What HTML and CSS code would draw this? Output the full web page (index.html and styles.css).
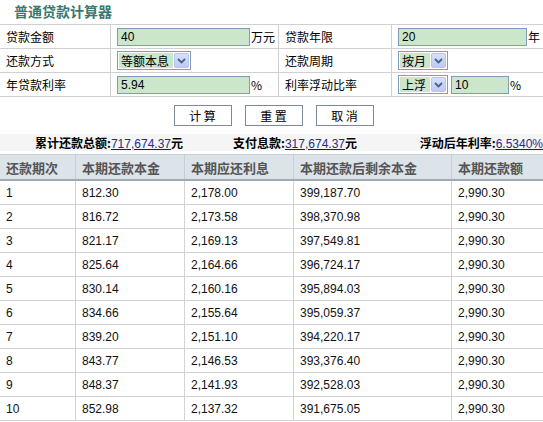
FILE: index.html
```html
<!DOCTYPE html>
<html lang="zh-CN">
<head>
    <meta charset="UTF-8">
    <title>普通贷款计算器</title>
    <link rel="stylesheet" href="styles.css">
</head>
<body>

<h2 class="title">普通贷款计算器</h2>

<table class="form-table">
    <tr>
        <td class="label">贷款金额</td>
        <td><input type="text" class="field" value="40"><span class="unit">万元</span></td>
        <td class="label">贷款年限</td>
        <td><input type="text" class="field year" value="20"><span class="unit">年</span></td>
    </tr>
    <tr>
        <td class="label">还款方式</td>
        <td>
            <span class="select"><span class="select-text">等额本息</span><span class="select-arrow"><svg width="9" height="6" viewBox="0 0 9 6"><path d="M1 1l3.5 3.5L8 1" fill="none" stroke="#4d6185" stroke-width="1.8"/></svg></span></span>
        </td>
        <td class="label">还款周期</td>
        <td>
            <span class="select"><span class="select-text">按月</span><span class="select-arrow"><svg width="9" height="6" viewBox="0 0 9 6"><path d="M1 1l3.5 3.5L8 1" fill="none" stroke="#4d6185" stroke-width="1.8"/></svg></span></span>
        </td>
    </tr>
    <tr>
        <td class="label">年贷款利率</td>
        <td><input type="text" class="field" value="5.94"><span class="unit">%</span></td>
        <td class="label">利率浮动比率</td>
        <td>
            <span class="select"><span class="select-text">上浮</span><span class="select-arrow"><svg width="9" height="6" viewBox="0 0 9 6"><path d="M1 1l3.5 3.5L8 1" fill="none" stroke="#4d6185" stroke-width="1.8"/></svg></span></span><input type="text" class="field small" value="10"><span class="unit">%</span>
        </td>
    </tr>
</table>

<div class="buttons">
    <button type="button">计 算</button>
    <button type="button">重 置</button>
    <button type="button">取 消</button>
</div>

<div class="summary">
    <div><b>累计还款总额:</b><a href="#">717,674.37</a><b>元</b></div>
    <div><b>支付息款:</b><a href="#">317,674.37</a><b>元</b></div>
    <div><b>浮动后年利率:</b><a href="#">6.5340%</a></div>
</div>

<table class="result">
    <thead>
        <tr>
            <th class="c1">还款期次</th>
            <th class="c2">本期还款本金</th>
            <th class="c3">本期应还利息</th>
            <th class="c4">本期还款后剩余本金</th>
            <th class="c5">本期还款额</th>
        </tr>
    </thead>
    <tbody>
        <tr><td>1</td><td>812.30</td><td>2,178.00</td><td>399,187.70</td><td>2,990.30</td></tr>
        <tr><td>2</td><td>816.72</td><td>2,173.58</td><td>398,370.98</td><td>2,990.30</td></tr>
        <tr><td>3</td><td>821.17</td><td>2,169.13</td><td>397,549.81</td><td>2,990.30</td></tr>
        <tr><td>4</td><td>825.64</td><td>2,164.66</td><td>396,724.17</td><td>2,990.30</td></tr>
        <tr><td>5</td><td>830.14</td><td>2,160.16</td><td>395,894.03</td><td>2,990.30</td></tr>
        <tr><td>6</td><td>834.66</td><td>2,155.64</td><td>395,059.37</td><td>2,990.30</td></tr>
        <tr><td>7</td><td>839.20</td><td>2,151.10</td><td>394,220.17</td><td>2,990.30</td></tr>
        <tr><td>8</td><td>843.77</td><td>2,146.53</td><td>393,376.40</td><td>2,990.30</td></tr>
        <tr><td>9</td><td>848.37</td><td>2,141.93</td><td>392,528.03</td><td>2,990.30</td></tr>
        <tr><td>10</td><td>852.98</td><td>2,137.32</td><td>391,675.05</td><td>2,990.30</td></tr>
    </tbody>
</table>

</body>
</html>
```

FILE: styles.css
```css
body {
    margin: 0;
    font-family: "Liberation Sans", "Noto Sans CJK SC", sans-serif;
    font-size: 12px;
    color: #000;
    background: #fff;
    overflow: hidden;
}
.title {
    margin: 0;
    height: 24px;
    line-height: 22px;
    padding-left: 14px;
    font-size: 14px;
    font-weight: bold;
    color: #3a786e;
    font-family: "Noto Sans CJK SC", sans-serif;
}
.form-table {
    width: 543px;
    border-collapse: collapse;
    table-layout: fixed;
}
.form-table td {
    height: 23px;
    padding: 0 0 0 6px;
    border: 1px solid #d0d0d0;
    white-space: nowrap;
    vertical-align: middle;
}
.form-table td:first-child {
    border-left: none;
}
.form-table td:last-child {
    border-right: none;
}
.form-table td:nth-child(1) { width: 104px; }
.form-table td:nth-child(2) { width: 161px; }
.form-table td:nth-child(3) { width: 106px; }
.form-table td:nth-child(4) { width: 148px; }
.label {
    font-family: "Noto Sans CJK SC", sans-serif;
    font-size: 12px;
}
.field {
    box-sizing: border-box;
    width: 133px;
    height: 18px;
    margin: 0;
    padding: 0 3px;
    border: 1px solid #7f9db9;
    background: #cbe6cb;
    font-family: "Liberation Sans", sans-serif;
    font-size: 12px;
    color: #000;
    vertical-align: middle;
}
.field.year {
    width: 129px;
}
.field.small {
    width: 58px;
    margin-left: 3px;
}
.unit {
    font-family: "Noto Sans CJK SC", sans-serif;
    vertical-align: middle;
    margin-left: 1px;
}
.select {
    display: inline-flex;
    align-items: center;
    box-sizing: border-box;
    height: 19px;
    border: 1px solid #7f9db9;
    padding: 1px;
    background: #fff;
    vertical-align: middle;
    gap: 1px;
}
.select-text {
    background: #cbe6cb;
    height: 15px;
    line-height: 15px;
    padding: 0 4px 0 2px;
    font-family: "Noto Sans CJK SC", sans-serif;
}
.select-arrow {
    box-sizing: border-box;
    width: 15px;
    height: 15px;
    border: 1px solid #b5c6ee;
    border-radius: 2px;
    background: linear-gradient(#d6e1fb, #b9cbf5);
    display: flex;
    align-items: center;
    justify-content: center;
}
.buttons {
    height: 37px;
    display: flex;
    justify-content: center;
    align-items: center;
    gap: 13px;
    padding-left: 4px;
}
.buttons button {
    width: 58px;
    height: 21px;
    margin: 0;
    padding: 0;
    border: 1px solid #7e8a96;
    background: #fff;
    font-family: "Noto Sans CJK SC", sans-serif;
    font-size: 12px;
    color: #000;
}
.summary {
    display: grid;
    grid-template-columns: 183px 174px 186px;
    background: #f5f5f5;
    height: 17px;
    line-height: 17px;
    white-space: nowrap;
}
.summary div {
    text-align: right;
}
.summary b {
    font-family: "Noto Sans CJK SC", sans-serif;
    font-weight: bold;
}
.summary a {
    color: #2a2a8a;
    text-decoration: underline;
    text-decoration-color: #222;
}
.result {
    margin-top: 3px;
    width: 543px;
    border-collapse: collapse;
    table-layout: fixed;
}
.result th {
    height: 24px;
    padding: 0 0 0 6px;
    text-align: left;
    background: #dde4e9;
    color: #555;
    font-family: "Noto Sans CJK SC", sans-serif;
    font-size: 13px;
    font-weight: bold;
    border: 1px solid #c7cfd5;
    border-bottom: 2px solid #9fabb4;
}
.result td {
    height: 23px;
    padding: 0 0 0 6px;
    border: 1px solid #d3d3d3;
    color: #111;
}
.result th:first-child, .result td:first-child { border-left: none; }
.result th:last-child, .result td:last-child { border-right: none; }
.c1 { width: 69px; }
.c2 { width: 102px; }
.c3 { width: 102px; }
.c4 { width: 151px; }
.c5 { width: 88px; }
```
